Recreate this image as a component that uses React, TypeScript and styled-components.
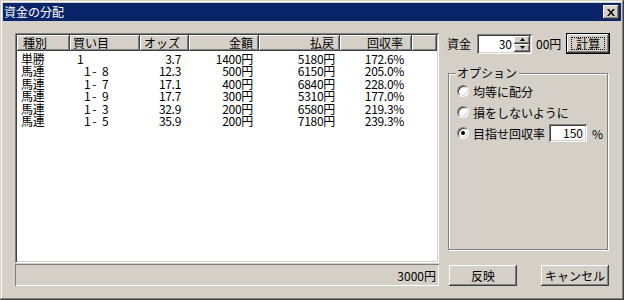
import React from "react";
import styled, { createGlobalStyle } from "styled-components";

const Global = createGlobalStyle`
  html, body { margin: 0; padding: 0; background: #d4d0c8; }
  body { font-family: "Noto Sans CJK JP", "Noto Sans", sans-serif; font-size: 12px; color: #000; }
  * { box-sizing: border-box; }
`;

const FACE = "#d4d0c8";
const raised = `inset -1px -1px #404040, inset 1px 1px #fff, inset -2px -2px #808080, inset 2px 2px ${FACE}`;
const sunken = `inset 1px 1px #808080, inset -1px -1px #fff, inset 2px 2px #404040, inset -2px -2px ${FACE}`;

const Window = styled.div`
  width: 624px;
  height: 300px;
  background: ${FACE};
  padding: 3px;
  box-shadow: inset -1px -1px #404040, inset 1px 1px ${FACE}, inset -2px -2px #808080, inset 2px 2px #fff;
  display: flex;
  flex-direction: column;
`;

const TitleBar = styled.div`
  height: 18px;
  background: #0a246a;
  color: #fff;
  display: flex;
  align-items: center;
  justify-content: space-between;
  padding: 0 2px 0 1px;
`;

const TitleText = styled.span`
  font-size: 12px;
  line-height: 18px;
`;

const CloseButton = styled.div`
  width: 16px;
  height: 14px;
  background: ${FACE};
  box-shadow: ${raised};
  display: flex;
  align-items: center;
  justify-content: center;
`;

const Body = styled.div`
  display: grid;
  grid-template-columns: 424px 1fr;
  column-gap: 8px;
  padding: 12px 0 0 12px;
`;

const LeftCol = styled.div`
  display: flex;
  flex-direction: column;
`;

const ListBox = styled.div`
  height: 230px;
  background: #fff;
  box-shadow: ${sunken};
  padding: 2px;
  display: flex;
  flex-direction: column;
`;

const Cols = "53px 70px 49px 70px 81px 72px 1fr";

const HeaderRow = styled.div`
  display: grid;
  grid-template-columns: ${Cols};
  height: 16px;
  background: ${FACE};
`;

const HeaderCell = styled.div<{ $align: "left" | "right"; $pad: number }>`
  box-shadow: inset -1px -1px #404040, inset 1px 1px #fff, inset -2px -2px #808080;
  text-align: ${(p) => p.$align};
  padding: ${(p) => (p.$align === "left" ? `0 0 0 ${p.$pad}px` : `0 ${p.$pad}px 0 0`)};
  line-height: 15px;
  white-space: nowrap;
  overflow: hidden;
`;

const Rows = styled.div`
  padding-top: 2px;
`;

const DataRow = styled.div`
  display: grid;
  grid-template-columns: ${Cols};
  height: 12.4px;
  line-height: 12.4px;
`;

const Cell = styled.div<{ $align: "left" | "right"; $pad: number; $spaced?: boolean }>`
  text-align: ${(p) => p.$align};
  padding: ${(p) => (p.$align === "left" ? `0 0 0 ${p.$pad}px` : `0 ${p.$pad}px 0 0`)};
  letter-spacing: ${(p) => (p.$spaced ? "1.5px" : "-0.3px")};
  white-space: pre;
  overflow: visible;
`;

const StatusBar = styled.div`
  margin-top: 1px;
  height: 22px;
  box-shadow: inset 1px 1px #808080, inset -1px -1px #fff;
  display: flex;
  align-items: center;
  justify-content: flex-end;
  padding-right: 3px;
`;

const RightCol = styled.div`
  display: flex;
  flex-direction: column;
`;

const FundRow = styled.div`
  display: flex;
  align-items: center;
  height: 21px;
`;

const Label = styled.span<{ $ml?: number }>`
  margin-left: ${(p) => p.$ml ?? 0}px;
  white-space: nowrap;
`;

const SpinBox = styled.div`
  margin-left: 6px;
  width: 55px;
  height: 20px;
  background: #fff;
  box-shadow: ${sunken};
  padding: 2px;
  display: flex;
`;

const SpinValue = styled.div`
  flex: 1;
  text-align: right;
  padding-right: 2px;
  line-height: 16px;
`;

const SpinButtons = styled.div`
  width: 16px;
  display: flex;
  flex-direction: column;
`;

const SpinBtn = styled.div`
  flex: 1;
  background: ${FACE};
  box-shadow: ${raised};
  display: flex;
  align-items: center;
  justify-content: center;
`;

const DefaultButton = styled.div`
  margin-left: 5px;
  width: 44px;
  height: 21px;
  border: 1px solid #000;
  background: ${FACE};
  box-shadow: ${raised};
  display: flex;
  align-items: center;
  justify-content: center;
  line-height: 15px;
`;

const FocusRect = styled.span`
  border: 1px dotted #000;
  line-height: 11px;
  height: 13px;
  width: 34px;
  text-align: center;
`;

const GroupBox = styled.div`
  position: relative;
  margin: 19px 0 0 1px;
  width: 160px;
  height: 177px;
  border: 1px solid #808080;
  box-shadow: inset 1px 1px #fff, 1px 1px #fff;
  padding: 7px 0 0 8px;
  display: flex;
  flex-direction: column;
`;

const Legend = styled.span`
  position: absolute;
  left: 7px;
  top: -9px;
  padding: 0 2px 0 1px;
  background: ${FACE};
  line-height: 16px;
`;

const RadioRow = styled.div`
  display: flex;
  align-items: center;
  height: 20px;
  margin-bottom: 1px;
`;

const RadioCircle = styled.span`
  width: 12px;
  height: 12px;
  border-radius: 50%;
  background: #fff;
  border: 1px solid;
  border-color: #808080 #fff #fff #808080;
  box-shadow: inset 1px 1px #404040, inset -1px -1px ${FACE};
  display: flex;
  align-items: center;
  justify-content: center;
  margin-right: 4px;
  flex: none;
`;

const RadioDot = styled.span`
  width: 4px;
  height: 4px;
  border-radius: 50%;
  background: #000;
`;

const SmallInput = styled.div`
  margin-left: 4px;
  width: 38px;
  height: 18px;
  background: #fff;
  box-shadow: ${sunken};
  text-align: right;
  padding-right: 4px;
  line-height: 18px;
`;

const ButtonRow = styled.div`
  display: flex;
  margin: 15px 0 0 2px;
  gap: 24px;
`;

const PushButton = styled.div`
  width: 68px;
  height: 21px;
  background: ${FACE};
  box-shadow: ${raised};
  display: flex;
  align-items: center;
  justify-content: center;
`;

type Align = "left" | "right";
const headers: { t: string; a: Align; p: number }[] = [
  { t: "種別", a: "left", p: 6 },
  { t: "買い目", a: "left", p: 3 },
  { t: "オッズ", a: "left", p: 4 },
  { t: "金額", a: "right", p: 6 },
  { t: "払戻", a: "right", p: 6 },
  { t: "回収率", a: "right", p: 9 },
  { t: "", a: "left", p: 0 },
];

const rows = [
  { kind: "単勝", me: "1", ind: 7, odds: "3.7", amt: "1400円", pay: "5180円", rate: "172.6%" },
  { kind: "馬連", me: "1- 8", ind: 14, odds: "12.3", amt: "500円", pay: "6150円", rate: "205.0%" },
  { kind: "馬連", me: "1- 7", ind: 14, odds: "17.1", amt: "400円", pay: "6840円", rate: "228.0%" },
  { kind: "馬連", me: "1- 9", ind: 14, odds: "17.7", amt: "300円", pay: "5310円", rate: "177.0%" },
  { kind: "馬連", me: "1- 3", ind: 14, odds: "32.9", amt: "200円", pay: "6580円", rate: "219.3%" },
  { kind: "馬連", me: "1- 5", ind: 14, odds: "35.9", amt: "200円", pay: "7180円", rate: "239.3%" },
];

const Arrow = ({ up }: { up: boolean }) => (
  <svg width="5" height="3" viewBox="0 0 5 3">
    {up ? <path d="M2.5 0 L5 3 L0 3 Z" fill="#000" /> : <path d="M0 0 L5 0 L2.5 3 Z" fill="#000" />}
  </svg>
);

export default function App() {
  return (
    <>
      <Global />
      <Window>
        <TitleBar>
          <TitleText>資金の分配</TitleText>
          <CloseButton>
            <svg width="8" height="7" viewBox="0 0 8 7">
              <path d="M0 0h2l2 2.5L6 0h2L5 3.5 8 7H6L4 4.5 2 7H0l3-3.5z" fill="#000" />
            </svg>
          </CloseButton>
        </TitleBar>
        <Body>
          <LeftCol>
            <ListBox>
              <HeaderRow>
                {headers.map((h, i) => (
                  <HeaderCell key={i} $align={h.a} $pad={h.p}>
                    {h.t}
                  </HeaderCell>
                ))}
              </HeaderRow>
              <Rows>
                {rows.map((r, i) => (
                  <DataRow key={i}>
                    <Cell $align="left" $pad={4}>{r.kind}</Cell>
                    <Cell $align="left" $pad={r.ind} $spaced>{r.me}</Cell>
                    <Cell $align="right" $pad={8}>{r.odds}</Cell>
                    <Cell $align="right" $pad={6}>{r.amt}</Cell>
                    <Cell $align="right" $pad={5}>{r.pay}</Cell>
                    <Cell $align="right" $pad={8}>{r.rate}</Cell>
                    <Cell $align="left" $pad={0} />
                  </DataRow>
                ))}
              </Rows>
            </ListBox>
            <StatusBar>3000円</StatusBar>
          </LeftCol>
          <RightCol>
            <FundRow>
              <Label>資金</Label>
              <SpinBox>
                <SpinValue>30</SpinValue>
                <SpinButtons>
                  <SpinBtn><Arrow up /></SpinBtn>
                  <SpinBtn><Arrow up={false} /></SpinBtn>
                </SpinButtons>
              </SpinBox>
              <Label $ml={4}>00円</Label>
              <DefaultButton>
                <FocusRect>計算</FocusRect>
              </DefaultButton>
            </FundRow>
            <GroupBox>
              <Legend>オプション</Legend>
              <RadioRow>
                <RadioCircle />
                <span>均等に配分</span>
              </RadioRow>
              <RadioRow>
                <RadioCircle />
                <span>損をしないように</span>
              </RadioRow>
              <RadioRow>
                <RadioCircle>
                  <RadioDot />
                </RadioCircle>
                <span>目指せ回収率</span>
                <SmallInput>150</SmallInput>
                <Label $ml={5}>%</Label>
              </RadioRow>
            </GroupBox>
            <ButtonRow>
              <PushButton>反映</PushButton>
              <PushButton>キャンセル</PushButton>
            </ButtonRow>
          </RightCol>
        </Body>
      </Window>
    </>
  );
}
